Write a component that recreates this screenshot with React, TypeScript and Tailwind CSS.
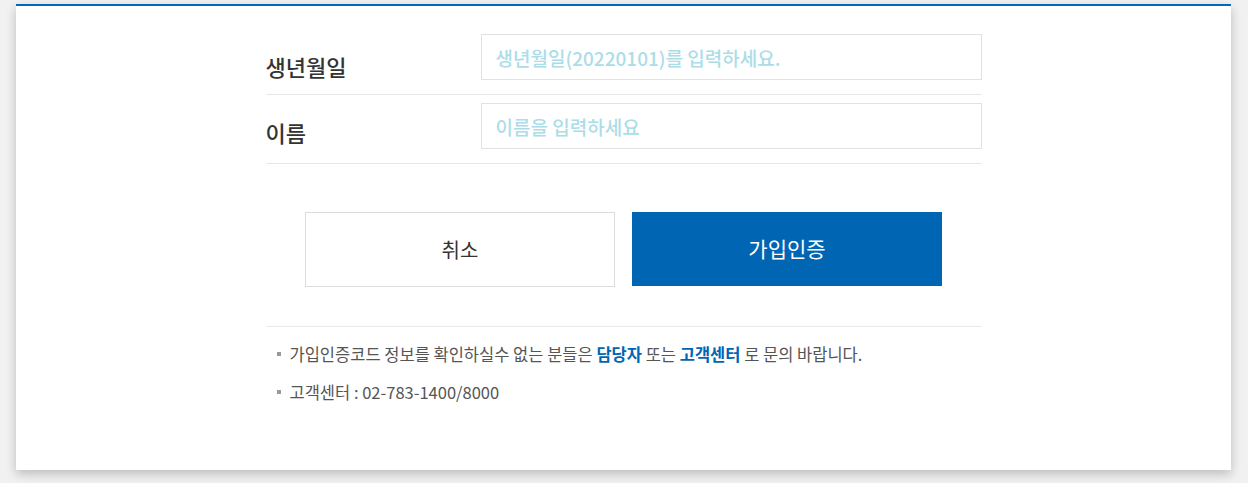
export default function App() {
  const font = { fontFamily: '"Noto Sans CJK KR", "Noto Sans", sans-serif' }
  return (
    <div className="min-h-screen bg-[#f1f1f1] pl-[16px] pr-[17px] pt-[4px]" style={font}>
      <div className="h-[466px] border-t-2 border-[#0068b7] bg-white pt-[20px] shadow-[0_4px_10px_rgba(0,0,0,0.22)]">
        <div className="mx-auto w-[716px]">
          {/* Form rows */}
          <div className="flex h-[69px] items-start border-b border-[#e6e6e6] pt-[8px]">
            <label className="w-[215px] pt-[17px] text-[22px] font-medium leading-[30px] text-[#333]">생년월일</label>
            <input
              type="text"
              placeholder="생년월일(20220101)를 입력하세요."
              className="h-[46px] flex-1 border border-[#e2e2e2] px-[14px] text-[19px] font-medium text-[#333] outline-none placeholder:text-[#abdde8]"
            />
          </div>
          <div className="flex h-[69px] items-start border-b border-[#e6e6e6] pt-[8px]">
            <label className="w-[215px] pt-[14px] text-[22px] font-medium leading-[30px] text-[#333]">이름</label>
            <input
              type="text"
              placeholder="이름을 입력하세요"
              className="h-[46px] flex-1 border border-[#e2e2e2] px-[14px] text-[19px] font-medium text-[#333] outline-none placeholder:text-[#abdde8]"
            />
          </div>

          {/* Buttons */}
          <div className="mt-[48px] flex justify-center gap-[17px]">
            <button type="button" className="h-[75px] w-[310px] border border-[#dcdcdc] bg-white text-[20px] text-[#333]">
              취소
            </button>
            <button type="button" className="h-[74px] w-[310px] bg-[#0066b3] text-[21px] text-white">
              가입인증
            </button>
          </div>

          {/* Notes */}
          <div className="mt-[39px] border-t border-[#ebebeb] pl-[11px] pt-[13px] text-[16.5px] text-[#555]">
            <p className="flex h-[28px] items-center">
              <span className="mr-[9px] inline-block h-[4px] w-[4px] bg-[#999]" />
              가입인증코드 정보를 확인하실수 없는 분들은&nbsp;<b className="font-bold text-[#0066b3]">담당자</b>&nbsp;또는&nbsp;
              <b className="font-bold text-[#0066b3]">고객센터</b>&nbsp;로 문의 바랍니다.
            </p>
            <p className="mt-[10px] flex h-[28px] items-center">
              <span className="mr-[9px] inline-block h-[4px] w-[4px] bg-[#999]" />
              고객센터 : 02-783-1400/8000
            </p>
          </div>
        </div>
      </div>
    </div>
  )
}
